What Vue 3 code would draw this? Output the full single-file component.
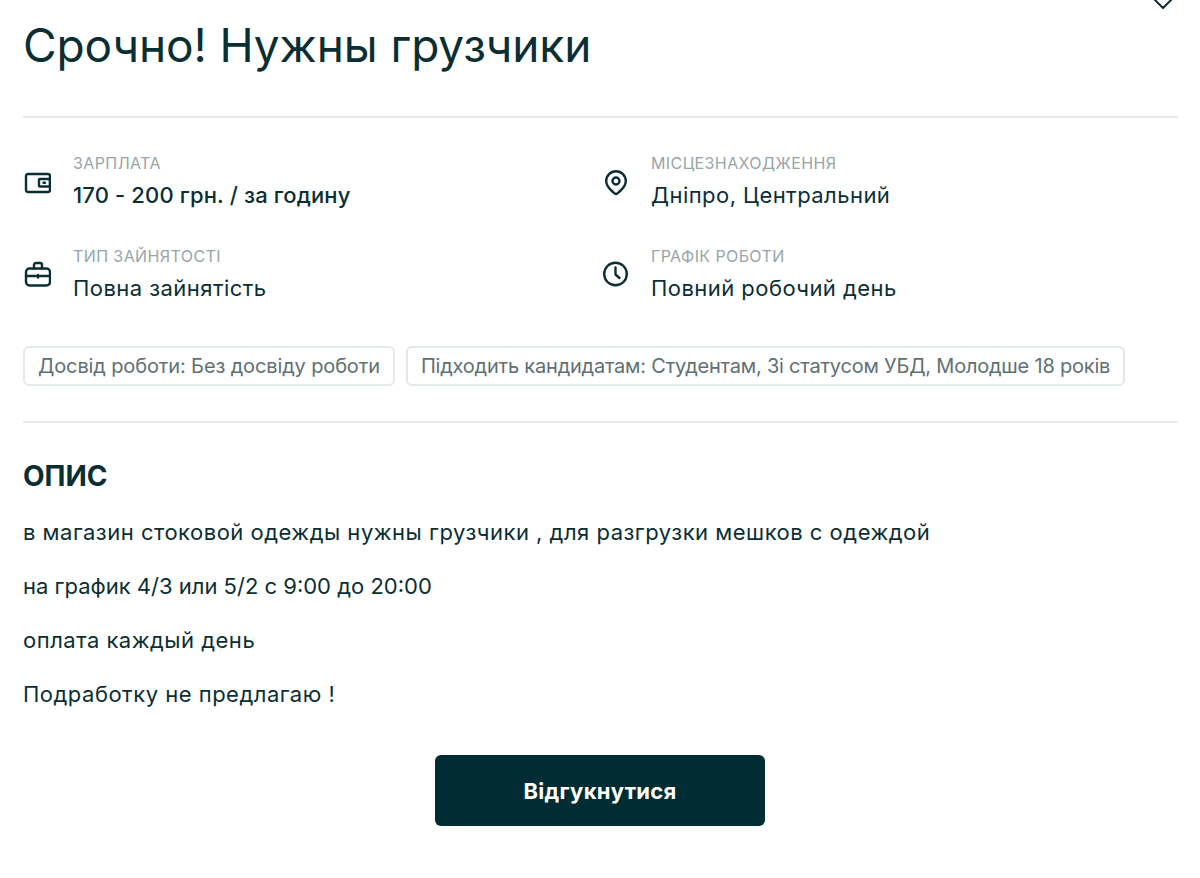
<template>
  <div class="page">
    <svg class="fav" width="24" height="24" viewBox="0 0 24 24" fill="none" stroke="#0b2e33" stroke-width="2" stroke-linejoin="round">
      <path d="M12 21 3.500 12.500a5 5 0 0 1 7-7L12 7l1.500-1.500a5 5 0 0 1 7 7z" />
    </svg>

    <h1 class="title">Срочно! Нужны грузчики</h1>
    <hr class="line line-top" />

    <div class="facts">
      <div v-for="f in facts" :key="f.label" class="fact">
        <span class="icon">
          <svg width="28" height="28" viewBox="0 0 28 28" fill="none" stroke="#0b2e33" stroke-width="2.400" stroke-linecap="round" stroke-linejoin="round">
            <template v-if="f.icon === 'wallet'">
              <rect x="3" y="5" width="24" height="18" rx="2" />
              <rect x="16" y="10" width="11" height="7.500" rx="1" />
              <path d="M20.500 13.750h1.500" />
            </template>
            <template v-else-if="f.icon === 'pin'">
              <path d="M15 25c-1 0-9.800-6.500-9.800-13a9.800 9.800 0 0 1 19.600 0c0 6.500-8.800 13-9.800 13z" />
              <circle cx="15" cy="12" r="3.500" />
            </template>
            <template v-else-if="f.icon === 'case'">
              <rect x="3" y="8.500" width="24" height="17" rx="3.500" />
              <path d="M11 8.500V5a2 2 0 0 1 2-2h4a2 2 0 0 1 2 2v3.500" />
              <path d="M3 16h24M15 15v2.500" />
            </template>
            <template v-else>
              <circle cx="14.500" cy="14" r="11.300" />
              <path d="M14.500 7.500v7l4 3.500" />
            </template>
          </svg>
        </span>
        <div class="fact-text">
          <div class="fact-label">{{ f.label }}</div>
          <div class="fact-value" :class="{ strong: f.strong }">{{ f.value }}</div>
        </div>
      </div>
    </div>

    <div class="tags">
      <span class="tag">Досвід роботи: Без досвіду роботи</span>
      <span class="tag tag-long">Підходить кандидатам: Студентам, Зі статусом УБД, Молодше 18 років</span>
    </div>
    <hr class="line line-bottom" />

    <h2 class="heading">ОПИС</h2>
    <p v-for="p in paragraphs" :key="p" class="para">{{ p }}</p>

    <div class="actions">
      <button class="apply">Відгукнутися</button>
    </div>
  </div>
</template>

<script setup>
const facts = [
  { icon: 'wallet', label: 'ЗАРПЛАТА', value: '170 - 200 грн. / за годину', strong: true },
  { icon: 'pin', label: 'МІСЦЕЗНАХОДЖЕННЯ', value: 'Дніпро, Центральний' },
  { icon: 'case', label: 'ТИП ЗАЙНЯТОСТІ', value: 'Повна зайнятість' },
  { icon: 'clock', label: 'ГРАФІК РОБОТИ', value: 'Повний робочий день' }
]

const paragraphs = [
  'в магазин стоковой одежды нужны грузчики , для разгрузки мешков с одеждой',
  'на график 4/3 или 5/2 с 9:00 до 20:00',
  'оплата каждый день',
  'Подработку не предлагаю !'
]
</script>

<style>
html, body {
  background: #fff;
}
</style>

<style scoped>
* {
  box-sizing: border-box;
}

.page {
  position: relative;
  width: 1200px;
  height: 878px;
  overflow: hidden;
  padding: 18px 22px 0 23px;
  font-family: Inter, "Open Sans", sans-serif;
  color: #0b2e33;
}

.fav {
  position: absolute;
  top: -13px;
  right: 25px;
}

.title {
  margin: 0;
  font-size: 46px;
  line-height: 54px;
  font-weight: 400;
  letter-spacing: -0.1px;
}

.line {
  border: 0;
  height: 2px;
  background: #e6eaea;
  margin: 0;
}

.line-top {
  margin-top: 44px;
}

.facts {
  display: grid;
  grid-template-columns: 578px 1fr;
  row-gap: 25px;
  margin-top: 25px;
}

.fact {
  display: flex;
  align-items: center;
  gap: 22px;
  height: 68px;
}

.icon {
  width: 28px;
  height: 28px;
  flex: none;
  margin-top: 12px;
}

.fact:nth-child(n + 3) .icon {
  margin-top: 8px;
}

.fact-text {
  margin-top: 9px;
}

.fact-label {
  font-size: 16px;
  line-height: 20px;
  color: #98a5a7;
  letter-spacing: 0.4px;
}

.fact-value {
  font-size: 22px;
  line-height: 30px;
  margin-top: 7px;
  letter-spacing: 0.45px;
}

.strong {
  font-weight: 500;
  letter-spacing: 0.15px;
}

.tags {
  display: flex;
  gap: 11px;
  margin-top: 42px;
}

.tag {
  height: 40px;
  padding: 0 13px;
  display: flex;
  align-items: center;
  border: 2px solid #e3e8e8;
  border-radius: 6px;
  font-size: 20px;
  letter-spacing: -0.13px;
  color: #5f7073;
  white-space: nowrap;
}

.tag-long {
  letter-spacing: -0.21px;
}

.line-bottom {
  margin-top: 35px;
}

.heading {
  margin: 35px 0 0;
  font-size: 28px;
  line-height: 36px;
  font-weight: 700;
}

.para {
  margin: 0;
  font-size: 22px;
  line-height: 30px;
  padding-top: 24px;
  letter-spacing: 0.5px;
}

.para:nth-of-type(2) {
  letter-spacing: 0;
}

.heading + .para {
  padding-top: 23px;
}

.actions {
  display: flex;
  justify-content: center;
  margin-top: 46px;
  padding-right: 1px;
}

.apply {
  width: 330px;
  height: 71px;
  border: 0;
  border-radius: 6px;
  background: #002c33;
  color: #fff;
  font-family: inherit;
  font-size: 22px;
  font-weight: 700;
  letter-spacing: 0.3px;
}
</style>
